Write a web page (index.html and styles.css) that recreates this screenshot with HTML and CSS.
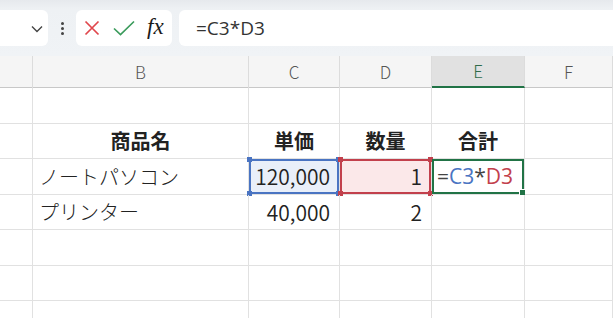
FILE: index.html
```html
<!DOCTYPE html>
<html lang="ja">

<head>
    <meta charset="UTF-8">
    <meta name="viewport" content="width=device-width, initial-scale=1.0">
    <title>Excel - 数式</title>
    <link rel="stylesheet" href="styles.css">
</head>

<body>
    <div class="toolbar">
        <div class="name-box">
            <svg class="chevron" width="12" height="8" viewBox="0 0 12 8">
                <path d="M1 1.5 L6 6.5 L11 1.5" fill="none" stroke="#444" stroke-width="1.4" />
            </svg>
        </div>
        <div class="dots">
            <span></span><span></span><span></span>
        </div>
        <div class="fx-buttons">
            <svg width="16" height="16" viewBox="0 0 16 16">
                <path d="M1.5 1.5 L14.5 14.5 M14.5 1.5 L1.5 14.5" stroke="#e0474c" stroke-width="1.7" />
            </svg>
            <svg width="22" height="16" viewBox="0 0 22 16">
                <path d="M1 8.5 L7.5 14.5 L21 1.5" fill="none" stroke="#3b9b5c" stroke-width="1.7" />
            </svg>
            <span class="fx">fx</span>
        </div>
        <div class="formula-box">=C3*D3</div>
    </div>

    <div class="sheet">
        <div class="col-head">
            <div class="hcell">&nbsp;</div>
            <div class="hcell">B</div>
            <div class="hcell">C</div>
            <div class="hcell">D</div>
            <div class="hcell active">E</div>
            <div class="hcell">F</div>
        </div>

        <div class="grid">
            <!-- row 1 -->
            <div class="cell"></div><div class="cell"></div><div class="cell"></div>
            <div class="cell"></div><div class="cell"></div><div class="cell"></div>

            <!-- row 2 -->
            <div class="cell"></div>
            <div class="cell bold center">商品名</div>
            <div class="cell bold center">単価</div>
            <div class="cell bold center">数量</div>
            <div class="cell bold center">合計</div>
            <div class="cell"></div>

            <!-- row 3 -->
            <div class="cell"></div>
            <div class="cell">ノートパソコン</div>
            <div class="cell num ref-blue">120,000
                <i class="handle tl"></i><i class="handle tr"></i><i class="handle bl"></i><i class="handle br"></i>
            </div>
            <div class="cell num ref-red">1
                <i class="handle tl"></i><i class="handle tr"></i><i class="handle bl"></i><i class="handle br"></i>
            </div>
            <div class="cell editing"><span class="op">=</span><span class="c-blue">C3</span><span class="op">*</span><span class="c-red">D3</span>
                <i class="fill-handle"></i>
            </div>
            <div class="cell"></div>

            <!-- row 4 -->
            <div class="cell"></div>
            <div class="cell">プリンター</div>
            <div class="cell num">40,000</div>
            <div class="cell num">2</div>
            <div class="cell"></div>
            <div class="cell"></div>

            <!-- rows 5-7 -->
            <div class="cell"></div><div class="cell"></div><div class="cell"></div>
            <div class="cell"></div><div class="cell"></div><div class="cell"></div>
            <div class="cell"></div><div class="cell"></div><div class="cell"></div>
            <div class="cell"></div><div class="cell"></div><div class="cell"></div>
            <div class="cell"></div><div class="cell"></div><div class="cell"></div>
            <div class="cell"></div><div class="cell"></div><div class="cell"></div>
        </div>
    </div>
</body>

</html>
```

FILE: styles.css
```css
body {
    margin: 0;
    width: 613px;
    height: 318px;
    overflow: hidden;
    background: white;
    font-family: "Noto Sans CJK JP", "Noto Sans", sans-serif;
    color: #222;
}

.toolbar {
    display: flex;
    align-items: flex-start;
    height: 56px;
    box-sizing: border-box;
    padding-top: 10px;
    background: linear-gradient(#e6e9ed 0, #eef1f4 9px, #f0f3f6 100%);
}

.name-box,
.fx-buttons,
.formula-box {
    height: 36px;
    background: white;
    border-radius: 6px;
    box-sizing: border-box;
}

.name-box {
    width: 56px;
    margin-left: -8px;
    display: flex;
    align-items: center;
    justify-content: flex-end;
    padding-right: 5px;
}

.chevron {
    margin-top: 1px;
}

.dots {
    width: 28px;
    height: 36px;
    display: flex;
    flex-direction: column;
    align-items: center;
    justify-content: center;
    gap: 2px;
}

.dots span {
    width: 3px;
    height: 3px;
    border-radius: 50%;
    background: #444;
}

.fx-buttons {
    width: 96px;
    display: flex;
    align-items: center;
    padding-left: 8px;
    gap: 13px;
}

.fx {
    font-family: "Liberation Serif", serif;
    font-style: italic;
    font-size: 23px;
    color: #1a1a1a;
    margin-top: -2px;
    margin-left: -1px;
}

.formula-box {
    flex: 1;
    margin-left: 7px;
    margin-right: -10px;
    padding-left: 17px;
    line-height: 36px;
    font-family: "Open Sans", sans-serif;
    font-size: 19px;
    color: #333;
}

.sheet {
    height: 262px;
    overflow: hidden;
}

.col-head,
.grid {
    display: grid;
    grid-template-columns: 33px 216px 91px 92px 93px 88px;
}

.col-head {
    height: 31px;
    background: #f5f5f5;
    border-bottom: 1px solid #c8c8c8;
}

.hcell {
    border-right: 1px solid #dcdcdc;
    text-align: center;
    line-height: 31px;
    font-size: 17px;
    font-weight: 300;
    color: #555;
}

.hcell.active {
    background: #e1e1e1;
    color: #2f6b4a;
    border-bottom: 2px solid #217346;
    line-height: 30px;
}

.grid {
    grid-auto-rows: 35.5px;
}

.cell {
    position: relative;
    border-right: 1px solid #e1e1e1;
    border-bottom: 1px solid #e1e1e1;
    display: flex;
    align-items: center;
    padding: 0 6px;
    font-size: 20px;
    font-weight: 300;
    white-space: nowrap;
    box-sizing: border-box;
}

.bold {
    font-weight: bold;
}

.center {
    justify-content: center;
}

.num {
    justify-content: flex-end;
    padding-right: 9px;
    font-size: 21px;
    font-weight: 350;
}

.ref-blue {
    background: #e9eff9;
    box-shadow: inset 0 0 0 2px #4a74c2;
}

.ref-red {
    background: #fbe8e9;
    box-shadow: inset 0 0 0 2px #c2404c;
}

.handle {
    position: absolute;
    width: 5px;
    height: 5px;
}

.ref-blue .handle {
    background: #4a74c2;
}

.ref-red .handle {
    background: #c2404c;
}

.handle.tl { left: -2px; top: -2px; }
.handle.tr { right: -2px; top: -2px; }
.handle.bl { left: -2px; bottom: -2px; }
.handle.br { right: -2px; bottom: -2px; }

.editing {
    box-shadow: inset 0 0 0 2px #217346;
    padding-left: 5px;
    font-family: "Open Sans", sans-serif;
    font-size: 21px;
    font-weight: normal;
}

.op {
    color: #444;
}

.c-blue {
    color: #4a74c2;
}

.c-red {
    color: #c2404c;
}

.fill-handle {
    position: absolute;
    right: -2px;
    bottom: -2px;
    width: 5px;
    height: 5px;
    background: #217346;
    border: 1px solid white;
}
```
